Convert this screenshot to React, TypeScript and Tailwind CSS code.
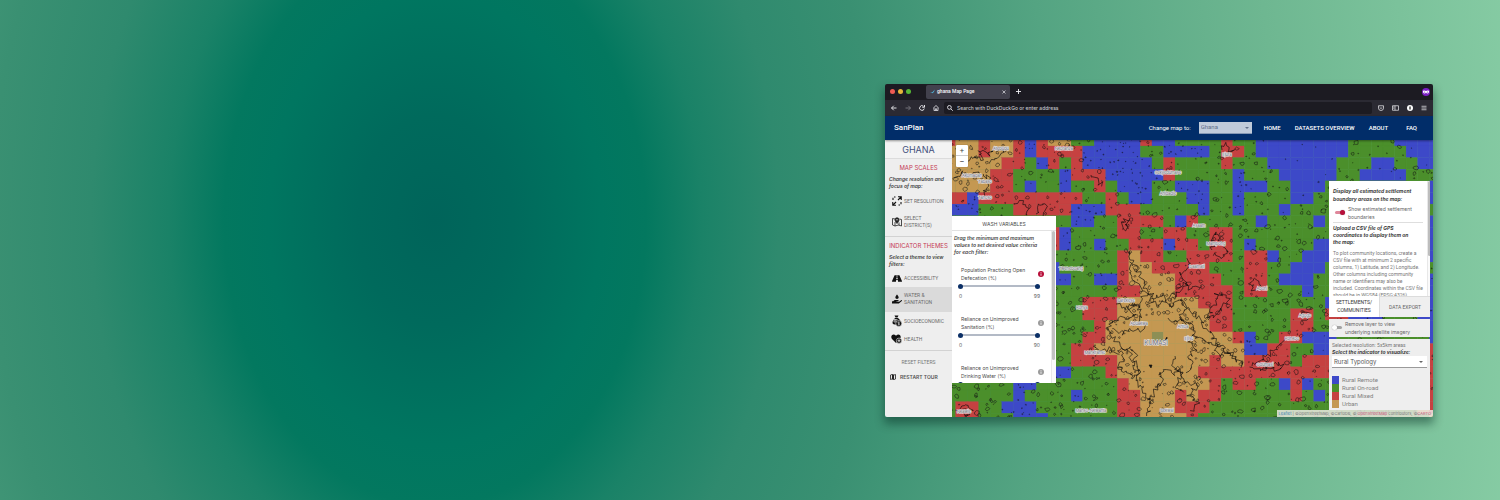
import React, { useState } from "react";
import { FaRoad, FaHandHoldingWater } from "react-icons/fa";

/* ---------- Map data ---------- */

const CELL_W = 11.55;
const CELL_H = 11.62;
const ORIGIN_X = 944.1;
const ORIGIN_Y = 134.4;

const COLORS: Record<string, string> = {
  B: "#3d49c8",
  G: "#4b8f2b",
  R: "#c64141",
  T: "#c49852",
};

// Run-length rows, north to south: typology letter followed by number of cells.
const ROWS = [
  "R1T2R1T2R1B1R1T2G2B4R1B2G4R1G2B8G4B4",
  "T3R1T2R1B1R4B5G2B4G1R2G1B8G5B3",
  "T5R2G1B1R1G1R1B6G1R1G4R1G3B6G3B2G2B2",
  "T4R2G4B1R3B5R1G5B1G3B5G2B4G3",
  "T4R2G1B1G2B1G2R1G1B3G2B3G2B3G2B3G9B1",
  "R2B1R9G2R1G1B2G3B2G2B1G4B2G10B1",
  "B3G3R5B3R3G5B1G2B1G3B1G12G1",
  "G11B2G2R4G1B1R1G5B1G4B1G9B1",
  "B9R1B1G4R2G2R2G2R2G9B9",
  "G9R1B1G2B1G2R3B1R2G1R2G1B1G5B11",
  "G15R1T1R2G2R4G1R2B1G2B12",
  "B10G5R1T2R5G3R2G2B3G10",
  "B11G2B2R1T4R4G2R2G1B3G10B1",
  "G15R2T3R5G1R2G3B1G2B9",
  "G12R3T7R3G8B10",
  "G12R3T8R2G5R2G1R2B3G3B3",
  "G13R1T9R2G5R2G10B1",
  "G12R2T11R1B1G2R2B3G8B1",
  "G11R2T13B2R2G2B4G6R1",
  "G11R4T8R1T2R4G1R11R1",
  "B11G3R1T7R21",
  "G6B2G7R1T7R1G1R2G2B1R1B1G10R1",
  "G6B1G4B1G3R2T3R1T1R2G6R1G1B1G9R1",
  "G1R2G2B3G7R2T3R3G18T1R1",
  "G1R2G3B3G6R2T4R1G20T1",
];

function expand(row: string): string[] {
  const cells: string[] = [];
  for (const m of row.matchAll(/([BGRT])(\d+)/g)) {
    for (let i = 0; i < Number(m[2]); i++) cells.push(m[1]);
  }
  return cells.slice(0, 43);
}

const GRID = ROWS.map(expand);

function prng(seed: number) {
  let s = seed;
  return () => {
    s = (s * 1664525 + 1013904223) % 4294967296;
    return s / 4294967296;
  };
}

function blob(rand: () => number, cx: number, cy: number, r: number) {
  const n = 7;
  const pts: string[] = [];
  const stretch = 0.7 + rand() * 0.7;
  for (let i = 0; i < n; i++) {
    const a = (i / n) * Math.PI * 2;
    const rr = r * (0.6 + rand() * 0.6);
    pts.push(`${(cx + Math.cos(a) * rr * stretch).toFixed(1)} ${(cy + Math.sin(a) * rr).toFixed(1)}`);
  }
  return `M${pts.join("L")}Z`;
}

function blobCounts(kind: string, r: number, c: number, dist: number): [number, number] {
  if (kind === "B") return c > 26 ? [0.3, 0] : [2.4, 0];
  if (kind === "T") return dist < 28 ? [0.1, 0] : [0.5, 1.6];
  if (kind === "R") return [0.8, 0.9];
  return r > 12 ? [0.7, 1.2] : [1, 0.6];
}

function buildSettlements() {
  const rand = prng(4217);
  let outline = "";
  let dots = "";
  GRID.forEach((row, r) =>
    row.forEach((kind, c) => {
      const x = ORIGIN_X + c * CELL_W;
      const y = ORIGIN_Y + r * CELL_H;
      const [small, big] = blobCounts(kind, r, c, Math.hypot(x - 1152, y - 342));
      const smallN = Math.floor(small + rand());
      const bigN = Math.floor(big + rand());
      for (let i = 0; i < smallN; i++) {
        dots += blob(rand, x + rand() * CELL_W, y + rand() * CELL_H, 0.3 + rand() * 0.5);
      }
      for (let i = 0; i < bigN; i++) {
        outline += blob(rand, x + rand() * CELL_W, y + rand() * CELL_H, 0.9 + rand() * 1.5);
      }
    })
  );
  return { outline, dots };
}

type Line = [number, number][];

// Boundaries of the larger settlements, as coarse control points.
const TOWNS: Line[] = [
  [[1130, 252], [1132, 262], [1130, 274], [1136, 284], [1147, 293], [1142, 280], [1136, 268], [1131, 260]],
  [[1144, 296], [1138, 306], [1128, 308], [1134, 316], [1122, 318], [1110, 323], [1106, 330], [1113, 337], [1120, 346], [1128, 352], [1134, 362], [1138, 374], [1136, 384], [1144, 392], [1150, 400], [1149, 416]],
  [[1144, 296], [1152, 292], [1150, 300], [1158, 308], [1163, 301], [1172, 306], [1180, 300], [1186, 308], [1179, 318], [1188, 324], [1196, 333], [1188, 340], [1196, 350], [1187, 357], [1193, 366], [1186, 374]],
  [[1116, 304], [1124, 309], [1132, 303], [1141, 311], [1137, 322], [1147, 324], [1141, 331], [1130, 328], [1122, 334], [1113, 330]],
  [[1171, 302], [1178, 292], [1186, 287], [1181, 274], [1190, 268], [1187, 260]],
  [[1180, 300], [1190, 311], [1200, 318], [1207, 330], [1216, 341], [1225, 350], [1233, 356], [1243, 366]],
  [[1193, 336], [1203, 341], [1214, 345], [1221, 354], [1231, 352], [1238, 362]],
  [[1150, 400], [1156, 389], [1163, 381], [1158, 374], [1168, 369], [1174, 376], [1180, 370], [1186, 381], [1196, 386], [1188, 395], [1198, 402], [1192, 412]],
  [[1118, 350], [1128, 347], [1136, 355], [1132, 365], [1140, 372], [1134, 380], [1126, 373], [1119, 366], [1124, 358], [1118, 350]],
  [[1175, 356], [1172, 366], [1180, 375], [1176, 386], [1184, 392]],
  [[1152, 298], [1158, 295], [1166, 299], [1170, 293], [1176, 298]],
  [[1168, 318], [1175, 322], [1182, 318], [1190, 328]],
  [[1208, 320], [1211, 310], [1217, 302], [1216, 294], [1224, 296], [1229, 300], [1222, 308], [1214, 314], [1208, 320]],
  [[1212, 250], [1213, 240], [1216, 232], [1221, 244], [1228, 250], [1222, 258], [1214, 254]],
  [[1176, 288], [1184, 284], [1190, 290], [1196, 284], [1200, 290]],
  [[1252, 366], [1262, 360], [1268, 366], [1280, 364], [1284, 366], [1274, 370], [1262, 371], [1252, 366]],
  [[1248, 284], [1254, 278], [1260, 284], [1255, 291], [1248, 284]],
  [[1301, 315], [1308, 311], [1311, 316], [1303, 321]],
  [[1262, 360], [1270, 354], [1276, 348], [1284, 340]],
  [[954, 178], [962, 172], [970, 178], [978, 172], [984, 178], [990, 176], [986, 186], [984, 196]],
  [[958, 160], [966, 162], [974, 156], [982, 160], [980, 150], [988, 154], [996, 148], [1004, 150], [998, 158], [990, 162]],
  [[1014, 204], [1022, 202], [1030, 208], [1024, 216]],
  [[1036, 214], [1040, 204], [1046, 206], [1042, 215]],
  [[1091, 176], [1096, 180], [1102, 186]],
  [[1122, 222], [1127, 219], [1128, 225], [1124, 229], [1122, 222]],
  [[1222, 150], [1226, 144], [1230, 150], [1234, 149], [1229, 154]],
  [[1093, 346], [1101, 352], [1110, 348], [1118, 355]],
  [[957, 410], [964, 405], [972, 410], [966, 416], [957, 410]],
];

function buildTowns() {
  const rand = prng(97);
  let d = "";
  for (const line of TOWNS) {
    d += `M${line[0][0]} ${line[0][1]}`;
    for (let i = 1; i < line.length; i++) {
      const [ax, ay] = line[i - 1];
      const [bx, by] = line[i];
      const steps = Math.max(2, Math.round(Math.hypot(bx - ax, by - ay) / 2.2));
      for (let k = 1; k <= steps; k++) {
        const t = k / steps;
        const px = ax + (bx - ax) * t + (rand() - 0.5) * 5;
        const py = ay + (by - ay) * t + (rand() - 0.5) * 5;
        d += `L${px.toFixed(1)} ${py.toFixed(1)}`;
      }
    }
  }
  return d;
}

const SETTLEMENTS = buildSettlements();
const TOWN_PATH = buildTowns();

const PLACES: [string, number, number][] = [
  ["Atebubu", 1001, 150],
  ["Akomadan", 972, 177],
  ["Tabaso", 985, 183],
  ["Tanoso", 985, 199],
  ["Nkoranza", 1064, 150],
  ["Sekyedumase", 1168, 174],
  ["Anidadie", 1168, 195],
  ["Ejura", 1227, 156],
  ["Asaam", 1199, 227],
  ["Mampong", 1216, 245],
  ["Daamati", 1197, 268],
  ["Tweneboang", 1071, 270],
  ["Konya", 1082, 309],
  ["Barekese", 1126, 302],
  ["Abuakwa", 1139, 325],
  ["Antoa", 1183, 328],
  ["Ejisu", 1189, 340],
  ["Mankranso", 1095, 354],
  ["Manso-Nkwanta", 1091, 412],
  ["Bekwai", 1167, 412],
  ["Aboni", 1262, 290],
  ["Agogo", 1305, 317],
  ["Konkoo", 1292, 340],
  ["Odumasi", 1265, 366],
  ["Nkawie", 964, 413],
];

function TypologyMap() {
  return (
    <svg
      className="absolute inset-0 h-full w-full"
      viewBox="952 140 481 277"
      preserveAspectRatio="xMinYMin slice"
      role="img"
      aria-label="Rural typology map around Kumasi"
    >
      {GRID.map((row, r) =>
        row.map((kind, c) => (
          <rect
            key={`${r}-${c}`}
            x={ORIGIN_X + c * CELL_W}
            y={ORIGIN_Y + r * CELL_H}
            width={CELL_W}
            height={CELL_H}
            fill={COLORS[kind]}
            stroke={COLORS[kind]}
            strokeWidth={0.3}
          />
        ))
      )}
      <rect x={1152} y={332} width={11} height={9} fill="#8d8f55" />
      <path d="M1165 340l2-3v4ZM1149 365l2 3 1-3Z" fill="#111" stroke="#111" strokeWidth={0.6} />
      <path d={SETTLEMENTS.outline} fill="none" stroke="#141414" strokeOpacity={0.85} strokeWidth={0.6} />
      <path d={SETTLEMENTS.dots} fill="#141414" fillOpacity={0.5} stroke="#141414" strokeOpacity={0.6} strokeWidth={0.4} />
      <path d={TOWN_PATH} fill="none" stroke="#0b0b0b" strokeOpacity={0.9} strokeWidth={0.7} strokeLinejoin="round" />
      <g fill="#66666c" stroke="#e9e6ea" strokeWidth={1.2} paintOrder="stroke" textAnchor="middle" fontFamily="Inter, 'Liberation Sans', sans-serif">
        {PLACES.map(([name, x, y]) => (
          <text key={name} x={x} y={y} fontSize={4}>
            {name}
          </text>
        ))}
        <text x={1156} y={345} fontSize={6}>
          KUMASI
        </text>
      </g>
    </svg>
  );
}

/* ---------- Browser chrome ---------- */

function Chrome() {
  return (
    <div className="bg-[#1c1b22] text-[#f0f0f4]">
      <div className="flex h-4 items-center pl-[5px] pr-[3px]">
        <span className="flex gap-[3px]">
          <i className="h-[5px] w-[5px] rounded-full bg-[#ee5b53]" />
          <i className="h-[5px] w-[5px] rounded-full bg-[#e6b63a]" />
          <i className="h-[5px] w-[5px] rounded-full bg-[#55b636]" />
        </span>
        <div className="ml-[15px] flex h-[14px] w-[84px] items-center rounded-[2px] bg-[#42414d] pl-1 pr-1">
          <svg className="h-[5px] w-[5px]" viewBox="0 0 10 10" aria-hidden="true">
            <path d="M0 6c3 2 6 1 9-5C9 7 5 11 0 6Z" fill="#4fb3d9" />
          </svg>
          <span className="ml-[2px] flex-1 text-[5px] font-semibold leading-[7px] [font-family:Roboto,sans-serif]">ghana Map Page</span>
          <button aria-label="Close tab">
            <svg className="h-1 w-1" viewBox="0 0 8 8" stroke="currentColor" strokeWidth={1.3} aria-hidden="true">
              <path d="M1 1l6 6M7 1L1 7" />
            </svg>
          </button>
        </div>
        <button aria-label="New tab" className="ml-[6px]">
          <svg className="h-[5px] w-[5px]" viewBox="0 0 10 10" stroke="currentColor" strokeWidth={1.8} aria-hidden="true">
            <path d="M5 0v10M0 5h10" />
          </svg>
        </button>
        <svg className="ml-auto h-2 w-2" viewBox="0 0 16 16" aria-hidden="true">
          <circle cx="8" cy="8" r="8" fill="#7a1fc4" />
          <path d="M2 6c2-1.500 4-1 6 0 2-1 4-1.500 6 0 .5 3-1 5-3 5-1.500 0-2-1.500-3-1.500S6.500 11 5 11C3 11 1.500 9 2 6Z" fill="#fff" />
          <circle cx="5.200" cy="8" r="1.100" fill="#7a1fc4" />
          <circle cx="10.800" cy="8" r="1.100" fill="#7a1fc4" />
        </svg>
      </div>
      <div className="flex h-4 items-center bg-[#2b2a33] pl-[6px] pr-[6px]">
        <div className="flex w-[53px] items-center gap-2">
          <button aria-label="Back">
            <svg className="h-[6px] w-[6px]" viewBox="0 0 12 12" fill="none" stroke="currentColor" strokeWidth={1.8} aria-hidden="true">
              <path d="M11 6H1M5.500 1.500L1 6l4.500 4.500" />
            </svg>
          </button>
          <button aria-label="Forward" className="opacity-40">
            <svg className="h-[6px] w-[6px]" viewBox="0 0 12 12" fill="none" stroke="currentColor" strokeWidth={1.8} aria-hidden="true">
              <path d="M1 6h10M6.500 1.500L11 6l-4.500 4.500" />
            </svg>
          </button>
          <button aria-label="Reload">
            <svg className="h-[6px] w-[6px]" viewBox="0 0 12 12" fill="none" stroke="currentColor" strokeWidth={1.8} aria-hidden="true">
              <path d="M10.500 7A4.700 4.700 0 1 1 9 2.500M11 0v4.500H6.500" />
            </svg>
          </button>
          <button aria-label="Home">
            <svg className="h-[6px] w-[6px]" viewBox="0 0 12 12" fill="none" stroke="currentColor" strokeWidth={1.5} aria-hidden="true">
              <path d="M.8 6L6 1l5.200 5M2 5.200v6h8v-6M4.800 11V7.500h2.400V11" />
            </svg>
          </button>
        </div>
        <label className="flex h-3 flex-1 items-center rounded-[2px] bg-[#1c1b22] pl-[3px]">
          <svg className="h-[6px] w-[6px]" viewBox="0 0 12 12" fill="none" stroke="currentColor" strokeWidth={1.7} aria-hidden="true">
            <circle cx="4.800" cy="4.800" r="3.800" />
            <path d="M7.600 7.600L11.500 11.500" />
          </svg>
          <input
            aria-label="Address"
            placeholder="Search with DuckDuckGo or enter address"
            className="ml-1 flex-1 bg-transparent text-[5px] font-medium leading-[8px] outline-none placeholder:text-[#c4c4ca]"
          />
        </label>
        <div className="ml-[6px] flex items-center gap-2">
          <svg className="h-[6px] w-[6px]" viewBox="0 0 12 12" fill="none" stroke="currentColor" strokeWidth={1.4} aria-hidden="true">
            <path d="M1 1.500h10V6a5 5 0 0 1-10 0ZM3.500 4.800L6 7.200l2.500-2.400" />
          </svg>
          <svg className="h-[6px] w-[7px]" viewBox="0 0 14 12" fill="none" stroke="currentColor" strokeWidth={1.4} aria-hidden="true">
            <path d="M1 1.500h12v9H1ZM6 1.500v9M2.500 4h2M2.500 6.500h2" />
          </svg>
          <svg className="h-[6px] w-[6px]" viewBox="0 0 12 12" aria-hidden="true">
            <circle cx="6" cy="6" r="6" fill="#fff" />
            <path d="M4.500 3h3v6h-3Z" fill="#444" />
          </svg>
          <svg className="h-[6px] w-[6px]" viewBox="0 0 12 12" stroke="currentColor" strokeWidth={1.4} aria-hidden="true">
            <path d="M1 2.500h10M1 6h10M1 9.500h10" />
          </svg>
        </div>
      </div>
    </div>
  );
}

/* ---------- Site header ---------- */

function Caret({ className }: { className: string }) {
  return (
    <svg className={className} viewBox="0 0 8 4" aria-hidden="true">
      <path d="M0 0h8L4 4Z" fill="currentColor" />
    </svg>
  );
}

function SiteHeader() {
  return (
    <header className="relative z-10 flex h-6 items-center bg-[#012d69] pl-[9px] pr-4 text-[6px] text-white shadow-[0_1px_2px_rgba(0,0,0,0.4)] [font-family:Roboto,sans-serif]">
      <a href="#home" className="text-[8px] font-medium leading-3">
        SanPlan
      </a>
      <label htmlFor="country" className="ml-auto">
        Change map to:
      </label>
      <div className="relative ml-2 flex items-center">
        <select
          id="country"
          className="h-3 w-[53px] appearance-none border-b border-[#8497b3] bg-[#c0cbda] pl-[2px] text-[6px] leading-[10px] text-[#61708a] outline-none"
        >
          <option>Ghana</option>
        </select>
        <Caret className="pointer-events-none absolute right-[3px] h-[2px] w-1 text-[#61708a]" />
      </div>
      <nav className="ml-3 flex gap-[14px] font-medium">
        <a href="#home">HOME</a>
        <a href="#datasets">DATASETS OVERVIEW</a>
        <a href="#about">ABOUT</a>
        <a href="#faq" className="ml-1">
          FAQ
        </a>
      </nav>
    </header>
  );
}

/* ---------- Sidebar ---------- */

const ResolutionIcon = () => (
  <svg className="h-[10px] w-[10px]" viewBox="0 0 20 20" fill="none" stroke="#111" strokeWidth={2.2} aria-hidden="true">
    <path d="M12 1.500h6.500V8M18 2l-6 6M8 18.500H1.500V12M2 18l6-6" />
    <path d="M2 8V3.500M4 2h3M18 12v4.500M16 18h-3" />
  </svg>
);

const DistrictIcon = () => (
  <svg className="h-[10px] w-[10px]" viewBox="0 0 20 20" fill="none" stroke="#222" strokeWidth={1.6} aria-hidden="true">
    <path d="M6 4L1 3v13l5 2 7-2 6 2V5l-4-1" />
    <path d="M6 10v8M14 11v6" />
    <path d="M10 13C7 9 6 7.500 6 5.500a4 4 0 0 1 8 0C14 7.500 13 9 10 13Z" fill="#222" />
    <circle cx="10" cy="5.500" r="1.300" fill="#eee" stroke="none" />
  </svg>
);

const EconomyIcon = () => (
  <svg className="h-3 w-[10px]" viewBox="0 0 20 24" aria-hidden="true">
    <path d="M5 1h8l-2 4H7Z" fill="#111" />
    <path d="M6 6h6c4 3 6 7 5 10-1 3-3 3-8 3s-8 0-8-4c0-3 2-6 5-9Z" fill="#111" />
    <path d="M3 9h8M2 12h8M6 8v8" stroke="#eee" strokeWidth={1.3} />
    <circle cx="13.500" cy="17" r="6" fill="#111" stroke="#eee" strokeWidth={1.2} />
    <path d="M13.500 13v8M15.500 15c-1-1-4-1-4 .5s4 1 4 2.700-3 1.500-4 .3" stroke="#eee" strokeWidth={1} fill="none" />
  </svg>
);

const HealthIcon = () => (
  <svg className="h-[10px] w-[11px]" viewBox="0 0 22 20" aria-hidden="true">
    <path d="M10 18L2 10C-1 6 1 1 5.500 1 8 1 9.500 2.500 10 4c.5-1.500 2-3 4.500-3C19 1 21 6 18 10Z" fill="#111" />
    <circle cx="16" cy="13.500" r="5.400" fill="#111" stroke="#eee" strokeWidth={1.2} />
    <path d="M16 10.500v6M13 13.500h6" stroke="#eee" strokeWidth={1.6} />
  </svg>
);

function SideButton({ icon, children, className }: { icon: React.ReactNode; children: React.ReactNode; className: string }) {
  return (
    <button
      className={`flex w-full items-center gap-[2px] pl-[6px] text-left text-[5px] leading-[7px] text-[#6a6a6a] [font-family:Roboto,sans-serif] ${className}`}
    >
      <span className="flex w-[11px] shrink-0 justify-center text-[#111]">{icon}</span>
      <span>{children}</span>
    </button>
  );
}

function Sidebar() {
  return (
    <aside className="w-[67px] shrink-0 bg-[#eeeeee] text-[5px] leading-[7px]">
      <h1 className="h-[19px] border-b border-[#dcdcdc] bg-[#f3f3f3] text-center text-[9px] leading-[19px] text-[#44507c]">GHANA</h1>
      <section className="border-b border-[#d2d2d2] pb-[2px] pt-[5px]">
        <h2 className="text-center text-[6px] leading-[8px] text-[#c53a55]">MAP SCALES</h2>
        <p className="mb-[3px] mt-1 pl-1 font-semibold italic text-[#3c3c3c]">
          Change resolution and
          <br />
          focus of map:
        </p>
        <SideButton icon={<ResolutionIcon />} className="h-[17px]">
          SET RESOLUTION
        </SideButton>
        <SideButton icon={<DistrictIcon />} className="h-6">
          SELECT
          <br />
          DISTRICT(S)
        </SideButton>
      </section>
      <section className="border-b border-[#d2d2d2] pb-[2px] pt-[5px]">
        <h2 className="whitespace-nowrap text-center text-[6px] leading-[8px] text-[#c53a55]">INDICATOR THEMES</h2>
        <p className="mb-[3px] mt-1 pl-1 font-semibold italic text-[#3c3c3c]">
          Select a theme to view
          <br />
          filters:
        </p>
        <SideButton icon={<FaRoad className="h-[9px] w-[10px]" />} className="h-4">
          ACCESSIBILITY
        </SideButton>
        <SideButton icon={<FaHandHoldingWater className="h-[10px] w-[10px]" />} className="h-[25px] bg-[#dadada]">
          WATER &amp;
          <br />
          SANITATION
        </SideButton>
        <SideButton icon={<EconomyIcon />} className="h-[19px]">
          SOCIOECONOMIC
        </SideButton>
        <SideButton icon={<HealthIcon />} className="h-[17px]">
          HEALTH
        </SideButton>
      </section>
      <div className="flex flex-col items-start pt-[7px]">
        <button className="h-2 self-center text-[5px] leading-[8px] text-[#777] [font-family:Roboto,sans-serif]">RESET FILTERS</button>
        <button className="mt-[7px] flex h-[9px] items-center gap-1 pl-[5px] text-[5px] font-semibold leading-[9px] text-[#555]">
          <svg className="h-[6px] w-[6px]" viewBox="0 0 12 12" aria-hidden="true">
            <path d="M1 2l3-1 4 1 3-1v9l-3 1-4-1-3 1Z" fill="none" stroke="#222" strokeWidth={1.6} />
            <path d="M4 1l4 1v9l-4-1Z" fill="#222" />
          </svg>
          RESTART TOUR
        </button>
      </div>
    </aside>
  );
}

/* ---------- Overlay panels ---------- */

const rangeClass =
  "pointer-events-none col-start-1 row-start-1 h-[5px] w-full appearance-none bg-transparent [&::-webkit-slider-thumb]:pointer-events-auto [&::-webkit-slider-thumb]:h-[5px] [&::-webkit-slider-thumb]:w-[5px] [&::-webkit-slider-thumb]:appearance-none [&::-webkit-slider-thumb]:rounded-full [&::-webkit-slider-thumb]:bg-[#0b2f66]";

interface RangeFilterProps {
  lines: [string, string];
  max: number;
  active?: boolean;
  showValues?: boolean;
}

function RangeFilter({ lines, max, active = false, showValues = true }: RangeFilterProps) {
  const [low, setLow] = useState(0);
  const [high, setHigh] = useState(max);
  const name = lines.join(" ");
  return (
    <div className="h-[49px]">
      <div className="flex items-center justify-between pl-[3px] text-[5px] leading-[8px] text-[#4a4a4a]">
        <span>
          {lines[0]}
          <br />
          {lines[1]}
        </span>
        <button
          aria-label={`About ${name}`}
          className={`-mr-1 h-[6px] w-[6px] rounded-full ${active ? "bg-[#b80f3a]" : "bg-[#9b9b9b]"}`}
        >
          <svg className="h-[6px] w-[6px]" viewBox="0 0 12 12" fill="#fff" aria-hidden="true">
            <path d="M5.200 2.500h1.600v1.600H5.200ZM5.200 5.200h1.600v4.300H5.200Z" />
          </svg>
        </button>
      </div>
      <div className="mt-[2px] grid items-center">
        <span className="col-start-1 row-start-1 mx-[2px] h-[2px] bg-[#b3bac6]" />
        <input type="range" aria-label={`${name} minimum`} min={0} max={max} value={low} onChange={(e) => setLow(Number(e.target.value))} className={rangeClass} />
        <input type="range" aria-label={`${name} maximum`} min={0} max={max} value={high} onChange={(e) => setHigh(Number(e.target.value))} className={rangeClass} />
      </div>
      {showValues && (
        <div className="mt-[3px] flex justify-between pl-px text-[5px] leading-[8px] text-[#5a5a5a]">
          <span>{low}</span>
          <span>{high}</span>
        </div>
      )}
    </div>
  );
}

function WashPanel() {
  return (
    <section className="absolute left-0 top-[76px] h-[167px] w-[104px] overflow-hidden bg-white">
      <h2 className="h-[15px] border-b border-[#e2e2e2] text-center text-[5px] leading-[16px] text-[#4c4c4c]">WASH VARIABLES</h2>
      <div className="flex">
        <div className="flex-1 pl-[2px] pt-1">
          <p className="whitespace-nowrap text-[5px] font-semibold italic leading-[7px] text-[#444]">
            Drag the minimum and maximum
            <br />
            values to set desired value criteria
            <br />
            for each filter:
          </p>
          <div className="mt-[10px] pl-1 pr-[11px]">
            <RangeFilter lines={["Population Practicing Open", "Defecation (%)"]} max={99} active />
            <RangeFilter lines={["Reliance on Unimproved", "Sanitation (%)"]} max={90} />
            <RangeFilter lines={["Reliance on Unimproved", "Drinking Water (%)"]} max={100} showValues={false} />
          </div>
        </div>
        <div className="w-[5px] border-l border-[#e8e8e8] bg-[#fafafa]">
          <div className="h-[129px] w-[3px] rounded-full bg-[#c1c1c1]" />
        </div>
      </div>
    </section>
  );
}

function Switch({ id, on }: { id: string; on: boolean }) {
  return (
    <input
      id={id}
      type="checkbox"
      role="switch"
      defaultChecked={on}
      className="relative h-[3px] w-[9px] shrink-0 appearance-none rounded-full bg-[#a3a3a3] before:absolute before:-left-px before:-top-px before:h-[5px] before:w-[5px] before:rounded-full before:bg-white before:shadow-[0_0_1px_#888] checked:bg-[#e0879b] checked:before:left-[5px] checked:before:bg-[#b80f3a]"
    />
  );
}

function SettlementPanel() {
  return (
    <section className="bg-white">
      <div className="flex h-[115px] overflow-hidden">
        <div className="flex-1 pl-1 pr-1 pt-[6px] text-[#3c3c3c]">
          <h3 className="whitespace-nowrap text-[5px] font-bold italic leading-[8px]">
            Display all estimated settlement
            <br />
            boundary areas on the map:
          </h3>
          <div className="flex items-center gap-1 border-b border-[#dedede] pb-px pl-[2px] pt-[2px]">
            <Switch id="show-settlements" on />
            <label htmlFor="show-settlements" className="text-[5px] leading-[8px] text-[#666]">
              Show estimated settlement
              <br />
              boundaries
            </label>
          </div>
          <h3 className="mt-[2px] whitespace-nowrap text-[5px] font-bold italic leading-[7px]">
            Upload a CSV file of GPS
            <br />
            coordinates to display them on
            <br />
            the map:
          </h3>
          <p className="mt-1 whitespace-nowrap text-[5px] leading-[7px] text-[#777] [font-family:Roboto,sans-serif]">
            To plot community locations, create a
            <br />
            CSV file with at minimum 2 specific
            <br />
            columns, 1) Latitude, and 2) Longitude.
            <br />
            Other columns including community
            <br />
            name or identifiers may also be
            <br />
            included. Coordinates within the CSV file
            <br />
            should be in WGS84 (EPSG:4326).
          </p>
        </div>
        <div className="w-1 border-l border-[#e8e8e8] bg-[#fafafa]">
          <div className="h-[75px] w-[3px] rounded-full bg-[#bdbdbd]" />
        </div>
      </div>
      <div className="flex h-[21px] text-center text-[5px] leading-[8px] [font-family:Roboto,sans-serif]">
        <button className="flex-1 text-[#333]">
          SETTLEMENTS/
          <br />
          COMMUNITIES
        </button>
        <button className="flex-1 border-l border-t border-[#dcdcdc] bg-[#efefef] text-[#666]">DATA EXPORT</button>
      </div>
    </section>
  );
}

const LEGEND = [
  { label: "Rural Remote", swatch: "bg-[#3d49c8]" },
  { label: "Rural On-road", swatch: "bg-[#4b8f2b]" },
  { label: "Rural Mixed", swatch: "bg-[#c64141]" },
  { label: "Urban", swatch: "bg-[#c49852]" },
];

function RightStack() {
  return (
    <div className="absolute bottom-[7px] right-[3px] flex w-[101px] flex-col gap-[2px]">
      <SettlementPanel />
      <div className="flex h-[18px] items-center gap-[3px] bg-[#eeeeee] pl-1">
        <Switch id="satellite" on={false} />
        <label htmlFor="satellite" className="whitespace-nowrap text-[5px] leading-[8px] text-[#666]">
          Remove layer to view
          <br />
          underlying satellite imagery
        </label>
      </div>
      <section className="bg-[#eeeeee] px-[3px] pb-[2px] pt-[3px]">
        <p className="text-[5px] leading-[7px] text-[#777] [font-family:Roboto,sans-serif]">Selected resolution: 5x5km areas</p>
        <label htmlFor="indicator" className="block whitespace-nowrap text-[5px] font-bold italic leading-[7px] text-[#3c3c3c]">
          Select the indicator to visualize:
        </label>
        <div className="relative flex items-center">
          <select id="indicator" className="h-3 w-full appearance-none border-b border-[#9a9a9a] bg-white pl-[2px] text-[6px] leading-[11px] text-[#555] outline-none">
            <option>Rural Typology</option>
          </select>
          <Caret className="pointer-events-none absolute right-1 h-[2px] w-1 text-[#666]" />
        </div>
        <ul className="mt-2 text-[6px] leading-[8px] text-[#808080] [font-family:Roboto,sans-serif]">
          {LEGEND.map((item) => (
            <li key={item.label} className="flex items-center gap-[3px]">
              <span className={`h-2 w-[7px] ${item.swatch}`} />
              {item.label}
            </li>
          ))}
        </ul>
      </section>
    </div>
  );
}

function ZoomControl() {
  return (
    <div className="absolute left-1 top-[5px] flex w-3 flex-col rounded-[1px] bg-white text-center text-[8px] leading-[11px] text-[#444] shadow-[0_0_1px_rgba(0,0,0,0.5)]">
      <button className="h-[11px] border-b border-[#ccc]" aria-label="Zoom in">
        +
      </button>
      <button className="h-[11px]" aria-label="Zoom out">
        −
      </button>
    </div>
  );
}

export default function App() {
  return (
    <div className="flex min-h-screen items-center bg-[radial-gradient(ellipse_1110px_1500px_at_29%_44%,#00645a_0%,#006a5c_7%,#007660_15%,#03785f_19%,#1a8267_24%,#2f8a6e_31%,#3a9072_40%,#54a482_56%,#6eb791_76%,#88cda5_100%)] [font-family:Inter,'Liberation_Sans',sans-serif]">
      <main className="ml-[59%] mr-[67px] flex-1 overflow-hidden rounded-[2px] shadow-[0_6px_10px_1px_rgba(0,40,30,0.45)]">
        <Chrome />
        <SiteHeader />
        <div className="flex min-h-[277px]">
          <Sidebar />
          <div className="relative flex-1 overflow-hidden">
            <TypologyMap />
            <ZoomControl />
            <WashPanel />
            <RightStack />
            <footer className="absolute bottom-0 right-0 whitespace-nowrap bg-[#f3eeee]/80 px-[2px] text-[4px] leading-[7px] text-[#777]">
              <a href="#leaflet" className="text-[#3c7fb0]">
                Leaflet
              </a>{" "}
              | ©OpenStreetMap, ©CartoDB, ©{" "}
              <a href="#osm" className="text-[#c9527c]">
                OpenStreetMap
              </a>{" "}
              contributors, ©
              <a href="#carto" className="text-[#c9527c]">
                CARTO
              </a>
            </footer>
          </div>
        </div>
      </main>
    </div>
  );
}
